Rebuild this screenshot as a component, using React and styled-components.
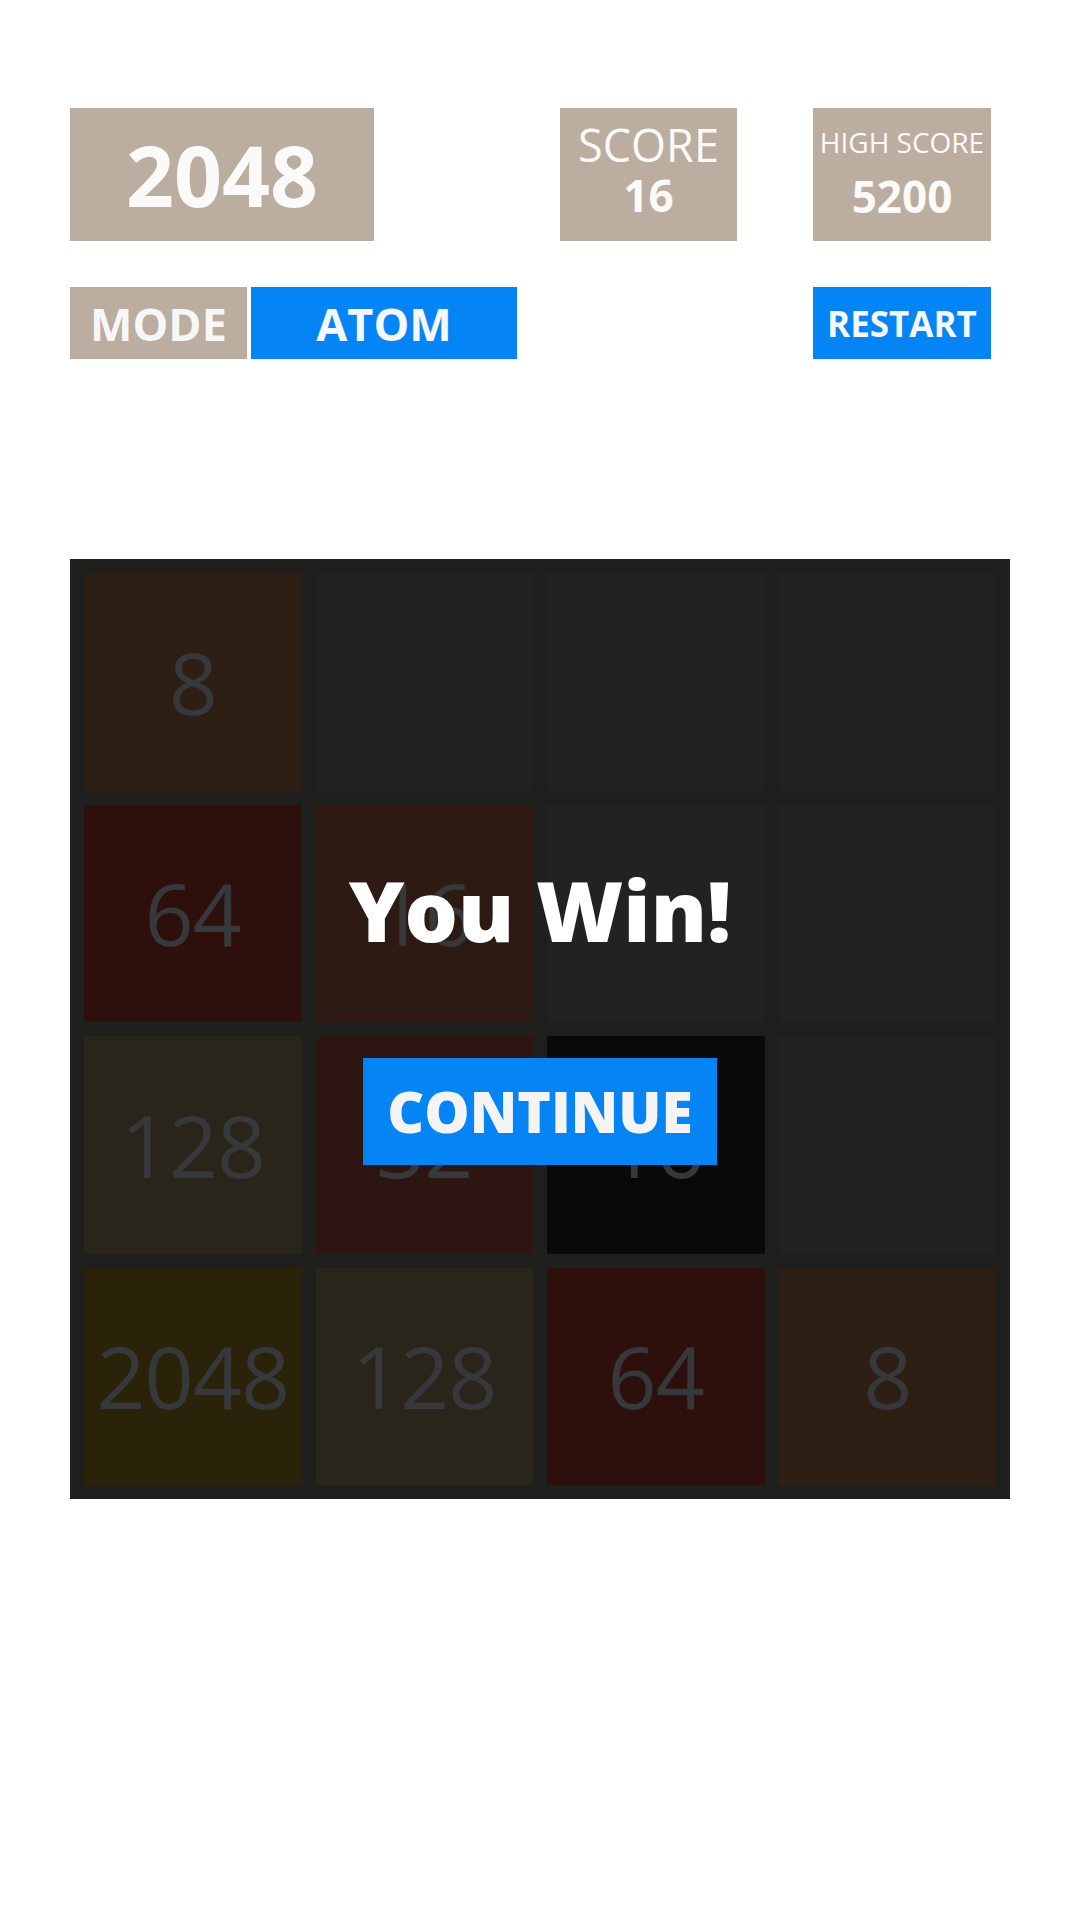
import React from "react";
import styled, { createGlobalStyle } from "styled-components";

const GlobalStyle = createGlobalStyle`
  html, body {
    margin: 0;
    padding: 0;
    background: #ffffff;
  }
  body {
    font-family: "Open Sans", "Noto Sans", "Liberation Sans", sans-serif;
  }
`;

const Page = styled.div`
  padding: 108px 70px 0;
  display: flex;
  flex-direction: column;
`;

const Header = styled.div`
  width: 921px;
  display: flex;
  flex-direction: column;
  gap: 46px;
`;

const TopRow = styled.div`
  display: flex;
  height: 133px;
`;

const ControlRow = styled.div`
  display: flex;
  height: 72px;
`;

const Spacer = styled.div`
  flex: 1;
`;

const Title = styled.div`
  width: 304px;
  background: #bbada0;
  color: #fbfaf8;
  display: flex;
  align-items: center;
  justify-content: center;
  font-size: 84px;
  font-weight: 700;
  line-height: 1;
`;

const ScoreBox = styled.div`
  width: ${(p) => p.$width}px;
  margin-left: ${(p) => p.$ml || 0}px;
  background: #bbada0;
  color: #fbfaf8;
  display: flex;
  flex-direction: column;
  align-items: center;
  padding-top: 12px;
  box-sizing: border-box;
`;

const ScoreLabel = styled.div`
  font-size: ${(p) => p.$size}px;
  line-height: ${(p) => p.$line}px;
  font-weight: 500;
  white-space: nowrap;
`;

const ScoreValue = styled.div`
  font-size: 44px;
  line-height: ${(p) => p.$line}px;
  font-weight: 700;
`;

const Pill = styled.div`
  width: ${(p) => p.$width}px;
  margin-left: ${(p) => p.$ml || 0}px;
  background: ${(p) => (p.$blue ? "#0585f5" : "#bbada0")};
  color: #f7f7f7;
  display: flex;
  align-items: center;
  justify-content: center;
  font-size: ${(p) => p.$size}px;
  font-weight: 700;
  line-height: 1;
  cursor: ${(p) => (p.$blue ? "pointer" : "default")};
`;

const Board = styled.div`
  position: relative;
  margin-top: 200px;
  width: 940px;
  height: 940px;
  box-sizing: border-box;
  padding: 14px;
  background: #1f1f1e;
  display: grid;
  grid-template-columns: repeat(4, 1fr);
  grid-template-rows: repeat(4, 1fr);
  gap: 14px;
`;

const Tile = styled.div`
  background: ${(p) => p.$bg};
  color: #36383b;
  display: flex;
  align-items: center;
  justify-content: center;
  font-size: 86px;
  font-weight: 500;
  line-height: 1;
  letter-spacing: -1px;
`;

const Overlay = styled.div`
  position: absolute;
  inset: 0;
  display: flex;
  flex-direction: column;
  align-items: center;
  padding-top: 300px;
  box-sizing: border-box;
`;

const WinText = styled.div`
  font-size: 84px;
  line-height: 102px;
  font-weight: 800;
  color: #ffffff;
`;

const ContinueButton = styled.button`
  margin-top: 97px;
  height: 107px;
  width: 354px;
  padding: 0;
  border: none;
  background: #0585f5;
  color: #f4f4f4;
  font-family: "Open Sans", "Noto Sans", sans-serif;
  font-size: 57px;
  line-height: 107px;
  font-weight: 800;
  cursor: pointer;
`;

const EMPTY = "#242220";
const tiles = [
  { v: 8, bg: "#2e1f14" },
  { v: null, bg: EMPTY },
  { v: null, bg: EMPTY },
  { v: null, bg: EMPTY },
  { v: 64, bg: "#2d100b" },
  { v: 16, bg: "#2d1a12" },
  { v: null, bg: EMPTY },
  { v: null, bg: EMPTY },
  { v: 128, bg: "#29251a" },
  { v: 32, bg: "#2d1511" },
  { v: 16, bg: "#080a09" },
  { v: null, bg: EMPTY },
  { v: 2048, bg: "#2a2209" },
  { v: 128, bg: "#29251a" },
  { v: 64, bg: "#2d100b" },
  { v: 8, bg: "#2e1f14" },
];

export default function App() {
  return (
    <>
      <GlobalStyle />
      <Page>
        <Header>
          <TopRow>
            <Title>2048</Title>
            <Spacer />
            <ScoreBox $width={177}>
              <ScoreLabel $size={45} $line={50}>SCORE</ScoreLabel>
              <ScoreValue $line={50}>16</ScoreValue>
            </ScoreBox>
            <ScoreBox $width={178} $ml={76}>
              <ScoreLabel $size={28} $line={44}>HIGH SCORE</ScoreLabel>
              <ScoreValue $line={64}>5200</ScoreValue>
            </ScoreBox>
          </TopRow>
          <ControlRow>
            <Pill $width={177} $size={45}>MODE</Pill>
            <Pill $width={266} $ml={4} $size={45} $blue>ATOM</Pill>
            <Spacer />
            <Pill $width={178} $size={35} $blue>RESTART</Pill>
          </ControlRow>
        </Header>
        <Board>
          {tiles.map((t, i) => (
            <Tile key={i} $bg={t.bg}>
              {t.v}
            </Tile>
          ))}
          <Overlay>
            <WinText>You Win!</WinText>
            <ContinueButton>CONTINUE</ContinueButton>
          </Overlay>
        </Board>
      </Page>
    </>
  );
}
